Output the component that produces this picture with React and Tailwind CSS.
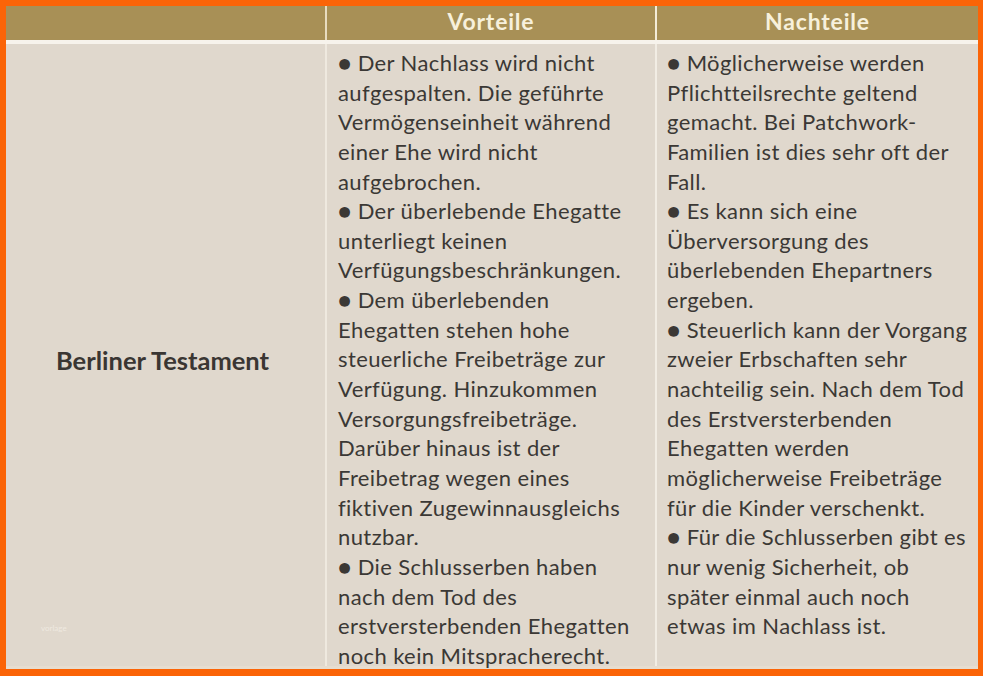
import React from "react";

const vorteile = [
  "● Der Nachlass wird nicht",
  "aufgespalten. Die geführte",
  "Vermögenseinheit während",
  "einer Ehe wird nicht",
  "aufgebrochen.",
  "● Der überlebende Ehegatte",
  "unterliegt keinen",
  "Verfügungsbeschränkungen.",
  "● Dem überlebenden",
  "Ehegatten stehen hohe",
  "steuerliche Freibeträge zur",
  "Verfügung. Hinzukommen",
  "Versorgungsfreibeträge.",
  "Darüber hinaus ist der",
  "Freibetrag wegen eines",
  "fiktiven Zugewinnausgleichs",
  "nutzbar.",
  "● Die Schlusserben haben",
  "nach dem Tod des",
  "erstversterbenden Ehegatten",
  "noch kein Mitspracherecht.",
];

const nachteile = [
  "● Möglicherweise werden",
  "Pflichtteilsrechte geltend",
  "gemacht. Bei Patchwork-",
  "Familien ist dies sehr oft der",
  "Fall.",
  "● Es kann sich eine",
  "Überversorgung des",
  "überlebenden Ehepartners",
  "ergeben.",
  "● Steuerlich kann der Vorgang",
  "zweier Erbschaften sehr",
  "nachteilig sein. Nach dem Tod",
  "des Erstversterbenden",
  "Ehegatten werden",
  "möglicherweise Freibeträge",
  "für die Kinder verschenkt.",
  "● Für die Schlusserben gibt es",
  "nur wenig Sicherheit, ob",
  "später einmal auch noch",
  "etwas im Nachlass ist.",
];

function Lines({ lines }) {
  return (
    <div className="flex flex-col">
      {lines.map((l, i) => (
        <div key={i} className="whitespace-nowrap h-[29.65px] leading-[29.65px]">
          {l}
        </div>
      ))}
    </div>
  );
}

export default function App() {
  return (
    <div
      className="w-[983px] h-[676px] bg-[#fb6407] pt-[6px] pl-[6px] pr-[5px] pb-[7px] overflow-hidden"
      style={{ fontFamily: "Lato, 'Noto Sans', sans-serif" }}
    >
      <div className="w-full h-full flex flex-col bg-[#e0d8cd]">
        <div className="h-[34px] shrink-0 flex bg-[#a89056] text-[#f7f0dc] font-bold text-[23px] tracking-[0.8px]">
          <div className="w-[319px]"></div>
          <div className="w-[2px] bg-[#e8dcc0]"></div>
          <div className="w-[328px] flex items-center justify-center pb-[3px]">Vorteile</div>
          <div className="w-[2px] bg-[#f4ecd8]"></div>
          <div className="flex-1 flex items-center justify-center pb-[3px]">Nachteile</div>
        </div>
        <div className="h-[4px] shrink-0 bg-[#f7f3ec]"></div>
        <div className="flex-1 min-h-0 flex text-[#3b3835] text-[22px] tracking-[0.4px] border-b-[3px] border-[#e6ddd0]">
          <div className="w-[319px] relative flex items-center justify-center">
            <div className="font-bold text-[#3a3633] text-[25.5px] tracking-normal pt-[10px] pr-[6px]">
              Berliner Testament
            </div>
            <div className="absolute left-[35px] top-[578px] text-[8px] text-[#efe9e0] tracking-normal">vorlage</div>
          </div>
          <div className="w-[2px] bg-[#efe9df]"></div>
          <div className="w-[328px] pl-[11px] pt-[4px]">
            <Lines lines={vorteile} />
          </div>
          <div className="w-[2px] bg-[#f2ede4]"></div>
          <div className="flex-1 pl-[10px] pt-[4px]">
            <Lines lines={nachteile} />
          </div>
        </div>
      </div>
    </div>
  );
}
